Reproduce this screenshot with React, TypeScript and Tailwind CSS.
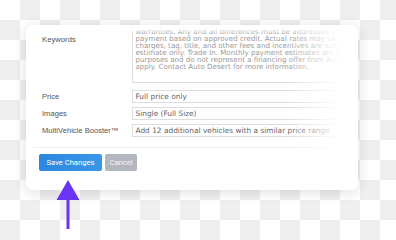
import React from 'react';

const keywordLines = [
  'Vehicle prices exclude dealer installed options and accessories. See',
  'warranties. Any and all differences must be addressed prior to sale. Monthly',
  'payment based on approved credit. Actual rates may vary. Excludes taxes,',
  'charges, tag, title, and other fees and incentives are subject to change',
  'estimate only. Trade In. Monthly payment estimates are for illustrative',
  'purposes and do not represent a financing offer from Auto Desert. Restrictions',
  'apply. Contact Auto Desert for more information.',
];

const fields = [
  { label: 'Price', value: 'Full price only' },
  { label: 'Images', value: 'Single (Full Size)' },
  { label: 'MultiVehicle Booster™', value: 'Add 12 additional vehicles with a similar price range' },
];

export default function App() {
  return (
    <div className="relative w-[396px] h-[240px] overflow-hidden bg-white bg-[conic-gradient(#efefef_25%,#ffffff_0_50%,#efefef_0_75%,#ffffff_0)] bg-size-[40px_40px] pt-[25px] pl-[26px]">
      <div className="relative w-[332px] h-[165px] rounded-[7px] bg-white shadow-[0_2px_14px_rgba(0,0,0,0.13)] overflow-hidden flex flex-col">
        {/* keywords */}
        <div className="flex items-start pl-4">
          <span className="w-[90px] mt-[10px] leading-[10px] text-[7.7px] text-[#555] font-['Liberation_Sans',Arial,sans-serif]">
            Keywords
          </span>
          <div className="w-[220px] h-[65px] mt-[-7px] border border-[#ddd] pt-[1.5px] pl-[2.5px] overflow-hidden font-['DejaVu_Sans',Verdana,sans-serif] text-[7.1px] leading-[7.1px] text-[#9a9a9a]">
            {keywordLines.map((line) => (
              <div key={line} className="whitespace-nowrap">
                {line}
              </div>
            ))}
          </div>
        </div>

        {/* other fields */}
        <div className="flex flex-col gap-[4px] mt-[7px]">
          {fields.map((f) => (
            <div key={f.label} className="flex items-center pl-4">
              <span className="w-[90px] text-[7.6px] leading-[10px] text-[#555] font-['Liberation_Sans',Arial,sans-serif] whitespace-nowrap">
                {f.label}
              </span>
              <div className="w-[220px] h-[13px] border border-[#ddd] pl-[2.5px] flex items-center overflow-hidden font-['DejaVu_Sans',Verdana,sans-serif] text-[7.4px] text-[#666] whitespace-nowrap">
                {f.value}
              </div>
            </div>
          ))}
        </div>

        <div className="mt-[10px] mx-[7px] h-px bg-[#eeeeee]" />

        <div className="flex gap-[3px] mt-[6px] pl-[13px] font-['Roboto',sans-serif] text-[7.6px] text-white">
          <button className="w-[63px] h-[17px] rounded-[2px] bg-[linear-gradient(90deg,#2b87df,#3a97e8)] flex items-center justify-center">
            Save Changes
          </button>
          <button className="w-[32px] h-[17px] rounded-[2px] bg-[#b2b6be] text-[#f4f5f7] flex items-center justify-center">
            Cancel
          </button>
        </div>

        {/* fades over the clipped content */}
        <div className="absolute top-0 left-0 right-0 h-[9px] bg-[linear-gradient(to_bottom,#ffffff_35%,rgba(255,255,255,0))]" />
        <div className="absolute top-0 bottom-0 right-0 w-[72px] bg-[linear-gradient(to_right,rgba(255,255,255,0),#ffffff_75%)]" />
      </div>

      {/* arrow annotation */}
      <svg className="absolute left-[55px] top-[178px]" width="26" height="52" viewBox="0 0 26 52">
        <path d="M13 2 L24.5 22 L1.5 22 Z" fill="#6a35f2" />
        <rect x="11.5" y="20" width="3" height="31" fill="#6a35f2" />
      </svg>
    </div>
  );
}
